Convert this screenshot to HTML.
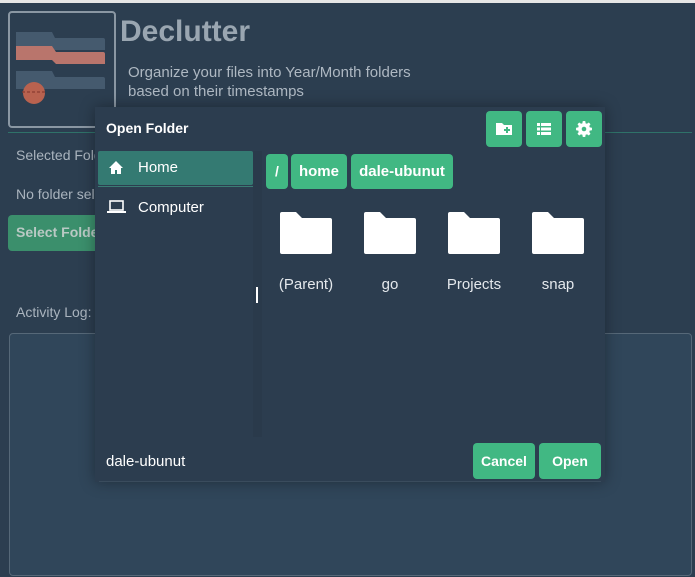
<!DOCTYPE html>
<html><head><style>
*{margin:0;padding:0;box-sizing:border-box}
body{width:695px;height:577px;background:#2c3e50;font-family:"Liberation Sans","DejaVu Sans",sans-serif;position:relative;overflow:hidden;color:#c8d0d8}
.a{position:absolute}
.g{background:#41b883;border-radius:4px;color:#fff;font-weight:bold}
</style></head><body>
<div class="a" style="left:0;top:0;width:695px;height:3px;background:#e6e6e6"></div>
<div class="a" style="left:8px;top:11px;width:108px;height:117px;border:2px solid #8a97a3;border-radius:4px"></div>
<svg class="a" style="left:0;top:0" width="116" height="120">
<path d="M16 32h36l3 6h48a2 2 0 0 1 2 2v10H16z" fill="#455a6e"/>
<path d="M16 46h36l4 6h47a2 2 0 0 1 2 2v10H56l-4-4H16z" fill="#b9756c"/>
<path d="M16 71h36l3 6h48a2 2 0 0 1 2 2v10H16z" fill="#455a6e"/>
<circle cx="34" cy="93" r="11" fill="#b9624f"/>
<path d="M22 92h24" stroke="#8a3c30" stroke-width="1.2" stroke-dasharray="3 2"/>
</svg>
<div class="a" style="left:120px;top:15px;font-size:30px;font-weight:bold;color:#9aa6b1">Declutter</div>
<div class="a" style="left:128px;top:63px;font-size:15px;line-height:19px;color:#aeb8c2">Organize your files into Year/Month folders<br>based on their timestamps</div>
<div class="a" style="left:8px;top:132px;width:684px;height:1px;background:#2f7269"></div>
<div class="a" style="left:16px;top:147px;font-size:14px;color:#aab4be">Selected Folder:</div>
<div class="a" style="left:16px;top:186px;font-size:14px;color:#aab4be">No folder selected</div>
<div class="a g" style="left:8px;top:215px;width:110px;height:36px;padding:9px 8px;font-size:14px;background:#3b8f6c;color:#b9c9c4">Select Folder</div>
<div class="a" style="left:16px;top:304px;font-size:14px;color:#aab4be">Activity Log:</div>
<div class="a" style="left:9px;top:333px;width:683px;height:243px;border:1px solid #566878;border-radius:4px;background:#30465a"></div>

<div class="a" style="left:95px;top:107px;width:510px;height:375px;background:#2c3d4f;box-shadow:0 0 14px rgba(0,0,0,.35)">
<div class="a" style="left:11px;top:13px;font-size:14px;font-weight:bold;color:#fff">Open Folder</div>
<div class="a g" style="left:391px;top:4px;width:36px;height:36px"><svg width="36" height="36"><path d="M10 12h6l2 2h8v10H10z" fill="#fff"/><path d="M18 19h6M21 16v6" stroke="#41b883" stroke-width="2"/></svg></div>
<div class="a g" style="left:431px;top:4px;width:36px;height:36px"><svg width="36" height="36"><g fill="#fff"><rect x="11" y="12" width="3" height="3"/><rect x="15" y="12" width="10" height="3"/><rect x="11" y="16.5" width="3" height="3"/><rect x="15" y="16.5" width="10" height="3"/><rect x="11" y="21" width="3" height="3"/><rect x="15" y="21" width="10" height="3"/></g></svg></div>
<div class="a g" style="left:471px;top:4px;width:36px;height:36px"><svg width="36" height="36"><g fill="#fff"><rect x="16.5" y="10" width="3" height="16" rx="1"/><rect x="16.5" y="10" width="3" height="16" rx="1" transform="rotate(45 18 18)"/><rect x="16.5" y="10" width="3" height="16" rx="1" transform="rotate(90 18 18)"/><rect x="16.5" y="10" width="3" height="16" rx="1" transform="rotate(135 18 18)"/><circle cx="18" cy="18" r="6"/></g><circle cx="18" cy="18" r="2.3" fill="#41b883"/></svg></div>
<div class="a" style="left:3px;top:44px;width:155px;height:34px;background:#347a72;border-radius:2px"></div>
<div class="a" style="left:3px;top:79px;width:155px;height:1px;background:#3a7c74"></div>
<svg class="a" style="left:13px;top:53px" width="16" height="14"><path d="M8 1L1 8h2v6h4v-4h2v4h4V8h2z" fill="#fff"/></svg>
<div class="a" style="left:43px;top:52px;font-size:15px;color:#fff">Home</div>
<svg class="a" style="left:12px;top:93px" width="19" height="14"><rect x="3" y="1" width="13" height="9" fill="none" stroke="#fff" stroke-width="1.6"/><rect x="0" y="11" width="19" height="2" fill="#fff"/></svg>
<div class="a" style="left:43px;top:92px;font-size:15px;color:#fff">Computer</div>
<div class="a" style="left:158px;top:44px;width:9px;height:286px;background:#2a3a4b"></div>
<div class="a" style="left:161px;top:180px;width:2px;height:16px;background:#fff"></div>
<div class="a g" style="left:171px;top:47px;width:22px;height:35px;text-align:center;line-height:35px;font-size:14px">/</div>
<div class="a g" style="left:196px;top:47px;width:56px;height:35px;text-align:center;line-height:35px;font-size:15px">home</div>
<div class="a g" style="left:256px;top:47px;width:102px;height:35px;text-align:center;line-height:35px;font-size:15px">dale-ubunut</div>
<div class="a" style="left:170px;top:104px;width:338px;font-size:15px;color:#e4e8ec">
<div class="a" style="left:0;width:82px;text-align:center"><svg width="54" height="44"><path d="M1 3a2 2 0 0 1 2-2h14l6 6h28a2 2 0 0 1 2 2v32a2 2 0 0 1-2 2H3a2 2 0 0 1-2-2z" fill="#fff"/></svg><div style="margin-top:17px">(Parent)</div></div>
<div class="a" style="left:84px;width:82px;text-align:center"><svg width="54" height="44"><path d="M1 3a2 2 0 0 1 2-2h14l6 6h28a2 2 0 0 1 2 2v32a2 2 0 0 1-2 2H3a2 2 0 0 1-2-2z" fill="#fff"/></svg><div style="margin-top:17px">go</div></div>
<div class="a" style="left:168px;width:82px;text-align:center"><svg width="54" height="44"><path d="M1 3a2 2 0 0 1 2-2h14l6 6h28a2 2 0 0 1 2 2v32a2 2 0 0 1-2 2H3a2 2 0 0 1-2-2z" fill="#fff"/></svg><div style="margin-top:17px">Projects</div></div>
<div class="a" style="left:252px;width:82px;text-align:center"><svg width="54" height="44"><path d="M1 3a2 2 0 0 1 2-2h14l6 6h28a2 2 0 0 1 2 2v32a2 2 0 0 1-2 2H3a2 2 0 0 1-2-2z" fill="#fff"/></svg><div style="margin-top:17px">snap</div></div>
</div>
<div class="a" style="left:11px;top:346px;font-size:15px;color:#fff">dale-ubunut</div>
<div class="a g" style="left:378px;top:336px;width:62px;height:36px;text-align:center;line-height:36px;font-size:14px">Cancel</div>
<div class="a g" style="left:444px;top:336px;width:62px;height:36px;text-align:center;line-height:36px;font-size:14px">Open</div>
<div class="a" style="left:4px;top:374px;width:502px;height:1px;background:#3a4c5d"></div>
</div>
</body></html>
